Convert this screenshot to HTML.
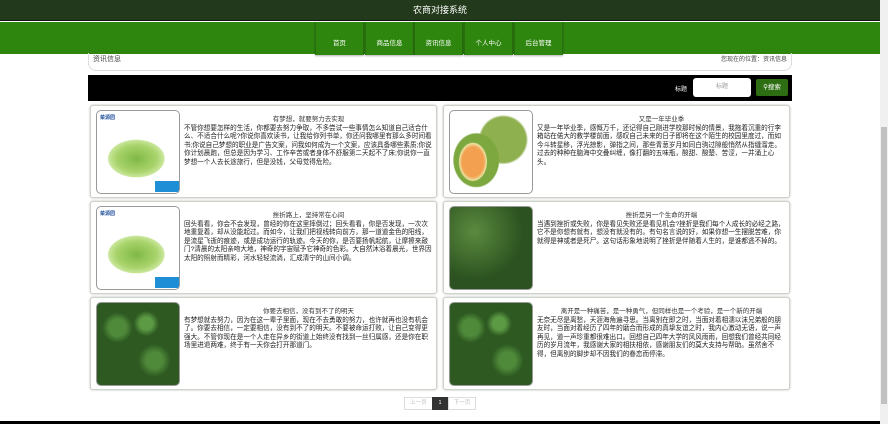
<!DOCTYPE html>
<html><head><meta charset="utf-8"><style>
*{margin:0;padding:0;box-sizing:border-box}
body{width:888px;height:424px;overflow:hidden;background:#fff;font-family:"Liberation Sans","Noto Sans CJK SC",sans-serif;position:relative}
.hd{position:absolute;left:0;top:0;width:880px;height:21px;background:#22391b;border-bottom:1px solid #111;color:#fff;font-size:9px;text-align:center;line-height:20px}
.nav{position:absolute;left:0;top:22px;width:880px;height:32px;background:#2f860f}
.nav a{position:absolute;top:0;height:33px;width:49px;color:#fff;font-size:6.5px;text-align:center;line-height:44px;border-left:1px solid #286f0d;border-right:1px solid #286f0d;box-shadow:0 1px 2px rgba(0,0,0,.3);background:#2f860f}
.bc{position:absolute;left:88px;top:53px;width:704px;height:18px;border:1px solid #ddd;border-top:none;border-radius:0 0 8px 8px;font-size:7px;color:#444}
.bar{position:absolute;left:88px;top:75px;width:704px;height:26px;background:#000}
.card{position:absolute;width:347px;height:93px;border:1.5px solid #ccd3c8;border-radius:3px;background:#fff;box-shadow:0 0 2px #bbb}
.img{position:absolute;left:5px;top:4px;width:84px;height:84px;border:1px solid #999;border-radius:5px;overflow:hidden}
.t{position:absolute;left:94px;top:7px;right:4px;text-align:center;font-size:6.5px;color:#333}
.p{position:absolute;left:93px;top:19px;right:4px;font-size:6.6px;line-height:8.4px;color:#222}
.let{background:radial-gradient(ellipse 45% 30% at 48% 58%,#7fb845,#a9d46c 55%,#c9e69a 75%,transparent 78%),#fff}
.mel{background:radial-gradient(ellipse 22% 30% at 28% 62%,#f3a050 60%,#ece2a0 75%,transparent 80%),radial-gradient(ellipse 34% 40% at 32% 60%,#7da840 80%,transparent 84%),radial-gradient(circle at 65% 35%,#8fb04e 30%,transparent 33%),#fff}
.spi{background:radial-gradient(circle at 30% 30%,#5b8a3e,#2b5220 60%),#234018}
.bro{background:radial-gradient(circle at 25% 30%,#4f8a3a 10%,transparent 18%),radial-gradient(circle at 70% 70%,#4f8a3a 10%,transparent 20%),radial-gradient(circle at 60% 25%,#5c9a44 8%,transparent 16%),#2e5a22}
.tag{position:absolute;left:58px;bottom:1px;width:24px;height:11px;background:#1e8fd6}
.logo{position:absolute;left:3px;top:3px;color:#1a4a9a;font-size:5px;font-weight:bold}
</style></head><body>
<div class="hd">农商对接系统</div>
<div class="nav">
<a style="left:315px">首页</a><a style="left:365px">商品信息</a><a style="left:414px">资讯信息</a><a style="left:464px">个人中心</a><a style="left:514px">后台管理</a>
</div>
<div class="bc"><span style="position:absolute;left:4px;top:1px">资讯信息</span><span style="position:absolute;right:4px;top:1px;font-size:6px">您现在的位置：资讯信息</span></div>
<div class="bar">
<span style="position:absolute;left:587px;top:9px;color:#fff;font-size:6px">标题</span>
<div style="position:absolute;left:605px;top:3px;width:58px;height:19px;background:#fff;border-radius:3px;color:#999;font-size:6px;text-align:center;line-height:19px">标题</div>
<div style="position:absolute;left:668px;top:4px;width:32px;height:17px;background:#2d6e12;border-radius:2px;color:#fff;font-size:6.5px;text-align:center;line-height:17px">&#9906;搜索</div>
</div>

<div class="card" style="left:90px;top:105px"><div class="img let"><span class="logo">菜源园</span><div class="tag"></div></div><div class="t">有梦想，就要努力去实现</div><div class="p">不管你想要怎样的生活，你都要去努力争取，不多尝试一些事情怎么知道自己适合什么、不适合什么呢?你说你喜欢读书，让我给你列书单，你还问我哪里有那么多时间看书;你说自己梦想的职业是广告文案，问我如何成为一个文案，应该具备哪些素质;你说你计划晨跑，但总是因为学习、工作辛苦或者身体不舒服第二天起不了床;你说你一直梦想一个人去长途旅行，但是没钱，父母觉得危险。</div></div>
<div class="card" style="left:443px;top:105px"><div class="img mel"></div><div class="t">又是一年毕业季</div><div class="p">又是一年毕业季，感慨万千，还记得自己刚进学校那时候的情景，我拖着沉重的行李箱站在偌大的教学楼前面，感叹自己未来的日子即将在这个陌生的校园里度过，而如今斗转星移，浮光掠影，弹指之间，那些青葱岁月如同白驹过隙般悄然从指缝溜走。过去的种种在脑海中交叠纠缠，像打翻的五味瓶，酸甜、酸楚、苦涩，一并涌上心头。</div></div>
<div class="card" style="left:90px;top:201px"><div class="img let"><span class="logo">菜源园</span><div class="tag"></div></div><div class="t">挫折路上，坚持常在心间</div><div class="p">回头看看，你会不会发现，曾经的你在这里摔倒过；回头看看，你是否发现，一次次地重复着，却从没能起过。而如今，让我们把视线转向前方，那一道道金色的阳线，是流星飞逝的痕迹，或是成功运行的轨迹。今天的你，是否要扬帆起航，让摩擦来敲门?清晨的太阳亲吻大地，神奇的宇宙赋予它神奇的色彩。大自然沐浴着晨光，世界因太阳的照射而精彩，河水轻轻流淌，汇成清宁的山间小调。</div></div>
<div class="card" style="left:443px;top:201px"><div class="img spi"></div><div class="t">挫折是另一个生命的开端</div><div class="p">当遇到挫折或失败，你是看见失败还是看见机会?挫折是我们每个人成长的必经之路，它不是你想有就有，想没有就没有的。有句名言说的好，如果你想一生摆脱苦难，你就得是神或者是死尸。这句话形象地说明了挫折是伴随着人生的，是谁都逃不掉的。</div></div>
<div class="card" style="left:90px;top:297px"><div class="img bro"></div><div class="t">你要去相信，没有到不了的明天</div><div class="p">有梦想就去努力，因为在这一辈子里面，现在不去勇敢的努力，也许就再也没有机会了。你要去相信，一定要相信，没有到不了的明天。不要被命运打败，让自己变得更强大。不管你现在是一个人走在异乡的街道上始终没有找到一丝归属感，还是你在职场里进退两难，终于有一天你会打开那道门。</div></div>
<div class="card" style="left:443px;top:297px"><div class="img bro"></div><div class="t">离开是一种痛苦，是一种勇气，但同样也是一个考验，是一个新的开端</div><div class="p">无奈无尽是离愁，天涯海角遍寻思。当离别在即之时，当面对着相濡以沫兄弟般的朋友时，当面对着经历了四年的磨合而形成的真挚友谊之时，我内心激动无语，说一声再见，道一声珍重都很难出口。回想自己四年大学的风风雨雨，回想我们曾经共同经历的岁月流年，我感谢大家的相扶相依，感谢朋友们的莫大支持与帮助。虽然舍不得，但离别的脚步却不因我们的眷恋而停滞。</div></div>

<div style="position:absolute;left:404px;top:397px;width:29px;height:13px;border:1px solid #ddd;font-size:5.5px;color:#bbb;text-align:center;line-height:11px">上一页</div>
<div style="position:absolute;left:432px;top:397px;width:16px;height:13px;background:#333;color:#fff;font-size:5.5px;text-align:center;line-height:13px">1</div>
<div style="position:absolute;left:448px;top:397px;width:28px;height:13px;border:1px solid #ddd;font-size:5.5px;color:#bbb;text-align:center;line-height:11px">下一页</div>
<div style="position:absolute;left:0;top:421px;width:880px;height:3px;background:#000"></div>
<div style="position:absolute;left:880px;top:0;width:8px;height:424px;background:#f0f0f0"></div>
<div style="position:absolute;left:881px;top:127px;width:6px;height:277px;background:#c1c1c1"></div>
</body></html>
